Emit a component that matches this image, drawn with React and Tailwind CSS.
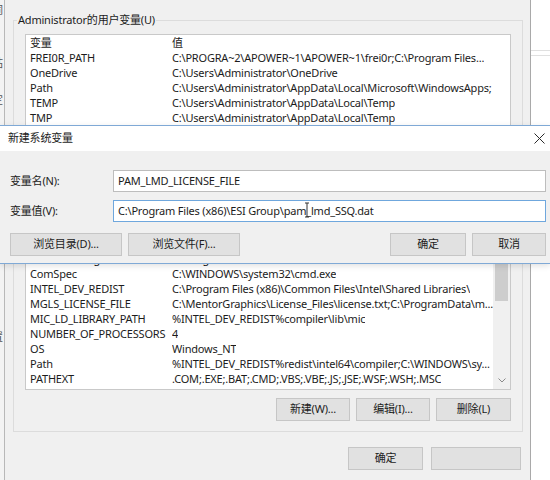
import React from 'react';

const userVars = [
  ['FREI0R_PATH', 'C:\\PROGRA~2\\APOWER~1\\APOWER~1\\frei0r;C:\\Program Files...'],
  ['OneDrive', 'C:\\Users\\Administrator\\OneDrive'],
  ['Path', 'C:\\Users\\Administrator\\AppData\\Local\\Microsoft\\WindowsApps;'],
  ['TEMP', 'C:\\Users\\Administrator\\AppData\\Local\\Temp'],
  ['TMP', 'C:\\Users\\Administrator\\AppData\\Local\\Temp'],
];

const sysVars = [
  ['ALLUSERSPROFILE', 'C:\\ProgramData'],
  ['CommonProgramFiles', 'C:\\Program Files\\Common Files'],
  ['ComSpec', 'C:\\WINDOWS\\system32\\cmd.exe'],
  ['INTEL_DEV_REDIST', 'C:\\Program Files (x86)\\Common Files\\Intel\\Shared Libraries\\'],
  ['MGLS_LICENSE_FILE', 'C:\\MentorGraphics\\License_Files\\license.txt;C:\\ProgramData\\m...'],
  ['MIC_LD_LIBRARY_PATH', '%INTEL_DEV_REDIST%compiler\\lib\\mic'],
  ['NUMBER_OF_PROCESSORS', '4'],
  ['OS', 'Windows_NT'],
  ['Path', '%INTEL_DEV_REDIST%redist\\intel64\\compiler;C:\\WINDOWS\\sy...'],
  ['PATHEXT', '.COM;.EXE;.BAT;.CMD;.VBS;.VBE;.JS;.JSE;.WSF;.WSH;.MSC'],
];

const Row = ({ name, value }) => (
  <div className="flex h-[15px] leading-[15px] whitespace-nowrap">
    <div className="w-[146px] shrink-0 pl-[4px] overflow-hidden">{name}</div>
    <div className="min-w-0 overflow-hidden">{value}</div>
  </div>
);

const Btn = ({ children, className = '' }) => (
  <div className={`flex items-center justify-center h-[23px] bg-[#e1e1e1] border border-[#c6c6c6] ${className}`}>
    {children}
  </div>
);

const EnvWindow = () => (
  <div className="w-[526px] shrink-0 bg-[#f0f0f0] border-r border-[#a9a9a9] pt-[12px] flex flex-col">
    {/* user variables */}
    <fieldset className="min-w-0 ml-[8px] mr-[7px] border border-[#dcdcdc] pb-[4px]">
      <legend className="ml-[3px] px-[1px] leading-[16px]">Administrator的用户变量(U)</legend>
      <div className="mt-[6px] mx-[11px] h-[130px] bg-white border border-[#c9c9c9] overflow-hidden">
        <Row name="变量" value="值" />
        {userVars.map(([n, v]) => (
          <Row key={n} name={n} value={v} />
        ))}
      </div>
      <div className="mt-[7px] mr-[11px] flex justify-end gap-[6px]">
        <Btn className="w-[74px]">新建(N)...</Btn>
        <Btn className="w-[74px]">编辑(E)...</Btn>
        <Btn className="w-[74px]">删除(D)</Btn>
      </div>
    </fieldset>

    {/* system variables */}
    <fieldset className="min-w-0 ml-[8px] mr-[7px] border border-[#dcdcdc] pb-[10px]">
      <legend className="ml-[3px] px-[1px] leading-[16px]">系统变量(S)</legend>
      <div className="mt-[5px] mx-[11px] h-[170px] bg-white border border-[#c9c9c9] overflow-hidden flex">
        <div className="flex-1 min-w-0">
          <Row name="变量" value="值" />
          {sysVars.map(([n, v]) => (
            <Row key={n + v} name={n} value={v} />
          ))}
        </div>
        <div className="w-[17px] shrink-0 bg-[#f0f0f0] flex flex-col">
          <div className="h-[17px]" />
          <div className="mt-[8px] mx-[2px] h-[55px] bg-[#cdcdcd]" />
          <div className="flex-1" />
          <div className="h-[17px] flex items-center justify-center">
            <svg width="8" height="5" viewBox="0 0 8 5">
              <path d="M0.5 0.5 L4 4 L7.5 0.5" fill="none" stroke="#8a8a8a" strokeWidth="1" />
            </svg>
          </div>
        </div>
      </div>
      <div className="mt-[8px] mr-[11px] flex justify-end gap-[6px]">
        <Btn className="w-[74px]">新建(W)...</Btn>
        <Btn className="w-[74px]">编辑(I)...</Btn>
        <Btn className="w-[75px]">删除(L)</Btn>
      </div>
    </fieldset>

    <div className="mt-[15px] pr-[9px] flex justify-end gap-[8px]">
      <Btn className="w-[75px]">确定</Btn>
      <Btn className="w-[90px]" />
    </div>
  </div>
);

const NewVarDialog = () => (
  <div className="absolute left-0 top-[125px] w-[550px] border-y border-[#7fa9d6] shadow-[0_2px_6px_rgba(0,0,0,0.12)]">
    <div className="h-[25px] bg-white flex items-center justify-between pl-[8px] pr-[5px]">
      <span>新建系统变量</span>
      <svg width="11" height="11" viewBox="0 0 11 11">
        <path d="M0.5 0.5 L10.5 10.5 M10.5 0.5 L0.5 10.5" stroke="#2b2b2b" strokeWidth="1" />
      </svg>
    </div>
    <div className="bg-[#f0f0f0] pt-[19px] pb-[7px] pl-[10px] pr-[4px] flex flex-col">
      <div className="flex items-center">
        <span className="w-[103px] shrink-0">变量名(N):</span>
        <div className="flex-1 h-[22px] bg-white border border-[#bdbdbd] flex items-center pl-[4px]">
          PAM_LMD_LICENSE_FILE
        </div>
      </div>
      <div className="mt-[8px] flex items-center">
        <span className="w-[103px] shrink-0">变量值(V):</span>
        <div className="flex-1 h-[22px] bg-white border border-[#6fa7dd] flex items-center pl-[4px] whitespace-nowrap">
          C:\Program Files (x86)\ESI Group\
          <span className="relative">
            pam
            <svg className="absolute right-[-4px] top-[-1px]" width="6" height="16" viewBox="0 0 6 16">
              <path d="M1 1 L5 1 M3 1 L3 15 M1 15 L5 15" stroke="#333" strokeWidth="1" fill="none" />
            </svg>
          </span>
          _lmd_SSQ.dat
        </div>
      </div>
      <div className="mt-[11px] flex">
        <Btn className="w-[112px]">浏览目录(D)...</Btn>
        <Btn className="w-[112px] ml-[6px]">浏览文件(F)...</Btn>
        <Btn className="w-[76px] ml-auto border-[#5e9ad6]">确定</Btn>
        <Btn className="w-[74px] ml-[6px]">取消</Btn>
      </div>
    </div>
  </div>
);

export default function App() {
  return (
    <div className="relative w-[550px] h-[480px] overflow-hidden bg-white text-[11px] tracking-[-0.2px] text-[#1c1c1c] font-['Noto_Sans','Noto_Sans_CJK_SC',sans-serif]">
      <div className="flex h-full">
        {/* edge of the window behind */}
        <div className="w-[4px] shrink-0 bg-[#f3f3f3] overflow-hidden text-[#555] leading-[12px]">
          <div className="-ml-[8px] w-[12px] flex flex-col">
            <span className="mt-[4px]">词</span>
            <span className="mt-[41px]">站</span>
            <span className="mt-[25px]">定</span>
            <span className="mt-[225px]">置</span>
          </div>
        </div>
        <div className="w-px shrink-0 bg-[#b8b8b8]" />
        <EnvWindow />
        {/* window to the right */}
        <div className="flex-1 bg-white pt-[50px]">
          <div className="h-[6px] border-y border-[#e0e0e0]" />
        </div>
      </div>
      <NewVarDialog />
    </div>
  );
}
